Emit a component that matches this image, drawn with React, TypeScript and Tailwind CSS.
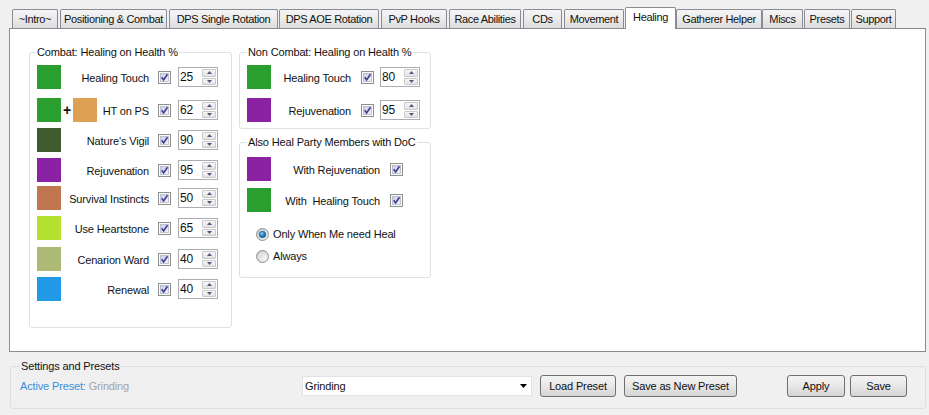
import React from "react";

function CheckBox() {
  return (
    <svg width="13" height="13" viewBox="0 0 13 13" className="block shrink-0">
      <defs>
        <linearGradient id="cbg" x1="0" y1="0" x2="1" y2="1">
          <stop offset="0" stopColor="#c9cde0" />
          <stop offset="1" stopColor="#f4f4f8" />
        </linearGradient>
      </defs>
      <rect x="0.5" y="0.5" width="12" height="12" fill="#fbfbfb" stroke="#8e8f8f" />
      <rect x="2.5" y="2.5" width="8" height="8" fill="url(#cbg)" stroke="#b4b8c6" strokeWidth="0.8" />
      <path d="M3.7 6.3 L5.6 8.9 L9.5 3.3" fill="none" stroke="#3e3e98" strokeWidth="1.7" />
    </svg>
  );
}

function Radio({ checked }: { checked?: boolean }) {
  return (
    <svg width="13" height="13" viewBox="0 0 13 13" className="block shrink-0">
      <defs>
        <linearGradient id="rbg" x1="0" y1="0" x2="1" y2="1">
          <stop offset="0" stopColor="#c8c8c8" />
          <stop offset="1" stopColor="#f5f5f5" />
        </linearGradient>
        <radialGradient id="rdot" cx="0.4" cy="0.35" r="0.7">
          <stop offset="0" stopColor="#8fd3f5" />
          <stop offset="0.5" stopColor="#2a86c4" />
          <stop offset="1" stopColor="#174f86" />
        </radialGradient>
        <linearGradient id="rin" x1="0" y1="0" x2="1" y2="1">
          <stop offset="0" stopColor="#d8d8d8" />
          <stop offset="1" stopColor="#f8f8f8" />
        </linearGradient>
      </defs>
      <circle cx="6.5" cy="6.5" r="6" fill="url(#rbg)" stroke="#8e8f8f" />
      {checked ? (
        <circle cx="6.5" cy="6.5" r="3.3" fill="url(#rdot)" stroke="#1e5c93" strokeWidth="0.6" />
      ) : (
        <circle cx="6.5" cy="6.5" r="3.8" fill="url(#rin)" />
      )}
    </svg>
  );
}

function Spin({ v }: { v: string }) {
  return (
    <div className="w-[40px] h-[20px] border border-[#abadb3] bg-white flex shrink-0">
      <div className="flex-1 pl-[1px] text-[12px] leading-[18px]">{v}</div>
      <div className="w-[15px] flex flex-col gap-px py-px pr-px">
        <div className="flex-1 border border-[#c9c9c9] rounded-[1px] bg-linear-to-b from-[#f7f7f7] to-[#e3e3e3] flex items-center justify-center">
          <svg width="5" height="3" viewBox="0 0 5 3" className="block">
            <path d="M0 3 L2.5 0 L5 3Z" fill="#4e5a7a" />
          </svg>
        </div>
        <div className="flex-1 border border-[#c9c9c9] rounded-[1px] bg-linear-to-b from-[#f7f7f7] to-[#e3e3e3] flex items-center justify-center">
          <svg width="5" height="3" viewBox="0 0 5 3" className="block">
            <path d="M0 0 L5 0 L2.5 3Z" fill="#4e5a7a" />
          </svg>
        </div>
      </div>
    </div>
  );
}

function Btn({ children, cls }: { children: React.ReactNode; cls: string }) {
  return (
    <div
      className={
        "h-[22px] border border-[#707070] rounded-[3px] bg-linear-to-b from-[#f4f4f4] via-[#e8e8e8] to-[#d4d4d4] flex items-center justify-center shrink-0 " +
        cls
      }
    >
      {children}
    </div>
  );
}

const tabs: { label: string; cls: string; sel?: boolean }[] = [
  { label: "~Intro~", cls: "ml-[12px] w-[46px]" },
  { label: "Positioning & Combat", cls: "ml-[2px] w-[107px]" },
  { label: "DPS Single Rotation", cls: "ml-[2px] w-[109px]" },
  { label: "DPS AOE Rotation", cls: "ml-px w-[100px]" },
  { label: "PvP Hooks", cls: "ml-[2px] w-[66px]" },
  { label: "Race Abilities", cls: "ml-[2px] w-[72px]" },
  { label: "CDs", cls: "ml-[2px] w-[39px]" },
  { label: "Movement", cls: "ml-[2px] w-[60px]" },
  { label: "Healing", cls: "ml-px w-[51px]", sel: true },
  { label: "Gatherer Helper", cls: "ml-0 w-[86px]" },
  { label: "Miscs", cls: "ml-0 w-[41px]" },
  { label: "Presets", cls: "ml-px w-[46px]" },
  { label: "Support", cls: "ml-px w-[45px]" },
];

const combatRows: { sw: string; sw2?: string; label: string; v: string; mt: string }[] = [
  { sw: "bg-[#2a9e2f]", label: "Healing Touch", v: "25", mt: "mt-[6px]" },
  { sw: "bg-[#2a9e2f]", sw2: "bg-[#dea154]", label: "HT on PS", v: "62", mt: "mt-[9px]" },
  { sw: "bg-[#405a30]", label: "Nature's Vigil", v: "90", mt: "mt-[6px]" },
  { sw: "bg-[#8b21a3]", label: "Rejuvenation", v: "95", mt: "mt-[6px]" },
  { sw: "bg-[#c0764f]", label: "Survival Instincts", v: "50", mt: "mt-[4px]" },
  { sw: "bg-[#b6e02f]", label: "Use Heartstone", v: "65", mt: "mt-[6px]" },
  { sw: "bg-[#adba76]", label: "Cenarion Ward", v: "40", mt: "mt-[7px]" },
  { sw: "bg-[#2299e6]", label: "Renewal", v: "40", mt: "mt-[6px]" },
];

export default function App() {
  return (
    <div className="w-[929px] h-[415px] bg-[#f0f0f0] font-['Liberation_Sans',Arial,sans-serif] text-[11px] text-[#111] tracking-[-0.15px] overflow-hidden">
      {/* Tab strip */}
      <div className="flex items-end h-[28px] tracking-[-0.35px]">
        {tabs.map((t) =>
          t.sel ? (
            <div
              key={t.label}
              className={
                "relative z-10 h-[22px] -mb-px bg-white border border-b-0 border-[#898c95] rounded-t-[2px] flex items-center justify-center whitespace-nowrap pb-[2px] " +
                t.cls
              }
            >
              {t.label}
            </div>
          ) : (
            <div
              key={t.label}
              className={
                "h-[19px] bg-linear-to-b from-[#f5f5f5] via-[#ebebeb] to-[#dcdcdc] border border-b-0 border-[#898c95] rounded-t-[2px] flex items-center justify-center whitespace-nowrap pt-px " +
                t.cls
              }
            >
              {t.label}
            </div>
          )
        )}
      </div>

      {/* Tab page */}
      <div className="ml-[9px] w-[917px] h-[324px] bg-white border border-[#898c95]">
        <div className="flex gap-[7px] pl-[19px] pt-[16px]">
          {/* Left group */}
          <fieldset className="w-[203px] h-[283px] border border-[#dbe2e7] rounded-[3px] pl-[7px]">
            <legend className="ml-[-1px] px-[1px] leading-[14px]">Combat: Healing on Health %</legend>
            {combatRows.map((r) => (
              <div key={r.label} className={"flex items-center h-[24px] " + r.mt}>
                <div className="w-[112px] flex items-center justify-between shrink-0">
                  <div className="flex items-center">
                    <div className={"w-[24px] h-[24px] " + r.sw} />
                    {r.sw2 ? (
                      <>
                        <div className="w-[12px] text-center font-bold text-[14px] leading-[14px]">+</div>
                        <div className={"w-[24px] h-[24px] " + r.sw2} />
                      </>
                    ) : null}
                  </div>
                  <div className="whitespace-nowrap pt-[2px]">{r.label}</div>
                </div>
                <div className="ml-[9px]">
                  <CheckBox />
                </div>
                <div className="ml-[7px]">
                  <Spin v={r.v} />
                </div>
              </div>
            ))}
          </fieldset>

          {/* Right column */}
          <div className="flex flex-col">
            <fieldset className="w-[192px] h-[84px] border border-[#dbe2e7] rounded-[3px] pl-[7px]">
              <legend className="ml-[0px] px-[1px] leading-[14px]">Non Combat: Healing on Health %</legend>
              <div className="flex items-center h-[24px] mt-[6px]">
                <div className="w-[104px] flex items-center justify-between shrink-0">
                  <div className="w-[24px] h-[24px] bg-[#2a9e2f]" />
                  <div className="whitespace-nowrap pt-[2px]">Healing Touch</div>
                </div>
                <div className="ml-[10px]">
                  <CheckBox />
                </div>
                <div className="ml-[6px]">
                  <Spin v="80" />
                </div>
              </div>
              <div className="flex items-center h-[24px] mt-[9px]">
                <div className="w-[104px] flex items-center justify-between shrink-0">
                  <div className="w-[24px] h-[24px] bg-[#8b21a3]" />
                  <div className="whitespace-nowrap pt-[2px]">Rejuvenation</div>
                </div>
                <div className="ml-[10px]">
                  <CheckBox />
                </div>
                <div className="ml-[6px]">
                  <Spin v="95" />
                </div>
              </div>
            </fieldset>

            <fieldset className="mt-[6px] w-[192px] h-[143px] border border-[#dbe2e7] rounded-[3px] pl-[7px]">
              <legend className="ml-[0px] px-[1px] leading-[14px]">Also Heal Party Members with DoC</legend>
              <div className="flex items-center h-[24px] mt-[8px]">
                <div className="w-[133px] flex items-center justify-between shrink-0">
                  <div className="w-[24px] h-[24px] bg-[#8b21a3]" />
                  <div className="whitespace-nowrap pt-[2px]">With Rejuvenation</div>
                </div>
                <div className="ml-[10px]">
                  <CheckBox />
                </div>
              </div>
              <div className="flex items-center h-[24px] mt-[7px]">
                <div className="w-[133px] flex items-center justify-between shrink-0">
                  <div className="w-[24px] h-[24px] bg-[#2a9e2f]" />
                  <div className="whitespace-pre pt-[2px]">With  Healing Touch</div>
                </div>
                <div className="ml-[10px]">
                  <CheckBox />
                </div>
              </div>
              <div className="flex items-center h-[16px] mt-[14px] pl-[9px] gap-[4px]">
                <Radio checked />
                <span className="whitespace-nowrap">Only When Me need Heal</span>
              </div>
              <div className="flex items-center h-[16px] mt-[6px] pl-[9px] gap-[4px]">
                <Radio />
                <span className="whitespace-nowrap">Always</span>
              </div>
            </fieldset>
          </div>
        </div>
      </div>

      {/* Settings and Presets */}
      <fieldset className="ml-[10px] mt-[7px] w-[916px] h-[50px] border border-[#dcdfe2] rounded-[3px]">
        <legend className="ml-[9px] px-[1px] leading-[14px]">Settings and Presets</legend>
        <div className="flex items-center h-[22px] mt-[2px] pl-[9px]">
          <div className="w-[282px] shrink-0 whitespace-nowrap">
            <span className="text-[#3b8fdc]">Active Preset: </span>
            <span className="text-[#a3a3a3]">Grinding</span>
          </div>
          <div className="w-[230px] h-[20px] bg-white border border-[#e2e2e2] flex items-center pl-[2px] pr-[4px] shrink-0">
            <span className="flex-1">Grinding</span>
            <svg width="7" height="4" viewBox="0 0 7 4" className="block">
              <path d="M0 0 L7 0 L3.5 4Z" fill="#000" />
            </svg>
          </div>
          <Btn cls="ml-[8px] w-[76px]">Load Preset</Btn>
          <Btn cls="ml-[8px] w-[113px]">Save as New Preset</Btn>
          <Btn cls="ml-[50px] w-[58px]">Apply</Btn>
          <Btn cls="ml-[5px] w-[57px]">Save</Btn>
        </div>
      </fieldset>
    </div>
  );
}
